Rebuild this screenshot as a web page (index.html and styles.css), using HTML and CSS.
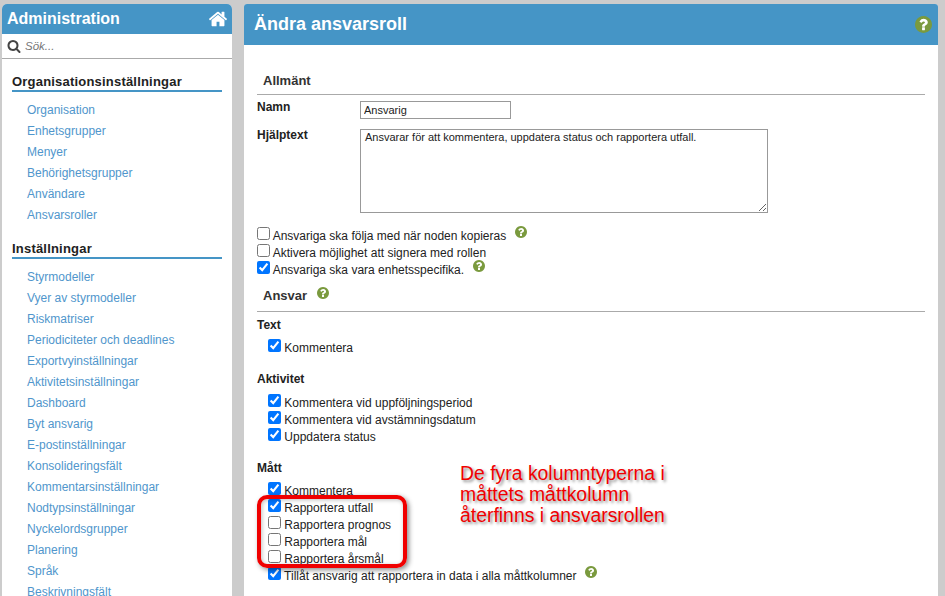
FILE: index.html
```html
<!DOCTYPE html>
<html lang="sv">
<head>
    <meta charset="UTF-8">
    <title>Ändra ansvarsroll</title>
    <link rel="stylesheet" href="styles.css">
</head>
<body>
    <svg class="defs" width="0" height="0">
        <symbol id="help" viewBox="128 128 1536 1536">
            <circle cx="896" cy="896" r="640" fill="#fff"/>
            <path d="M1024 1376v-192q0-14-9-23t-23-9h-192q-14 0-23 9t-9 23v192q0 14 9 23t23 9h192q14 0 23-9t9-23zm256-672q0-88-55.500-163t-138.500-116-170-41q-243 0-371 213-15 24 8 42l132 100q7 6 19 6 16 0 25-12 53-68 86-92 34-24 86-24 48 0 85.500 26t37.500 59q0 38-20 61t-68 45q-63 28-115.500 86.500t-52.500 125.500v36q0 14 9 23t23 9h192q14 0 23-9t9-23q0-19 21.500-49.500t54.500-49.500q32-18 49-28.500t46-35 44.500-48 28-60.500 12.500-81zm384 192q0 209-103 385.500t-279.500 279.500-385.500 103-385.500-103-279.500-279.500-103-385.500 103-385.500 279.500-279.500 385.500-103 385.500 103 279.500 279.500 103 385.500z"/>
        </symbol>
    </svg>

    <div class="page">
        <aside class="sidebar">
            <div class="side-head">
                <span>Administration</span>
                <svg class="home" viewBox="0 0 1792 1792"><path d="M1472 992v480q0 26-19 45t-45 19h-384v-384h-256v384h-384q-26 0-45-19t-19-45v-480q0-1 .5-3t.5-3l575-474 575 474q1 2 1 6zm223-69l-62 74q-8 9-21 11h-3q-13 0-21-7l-692-577-692 577q-12 8-24 7-13-2-21-11l-62-74q-8-10-7-23.500t11-21.500l719-599q32-26 76-26t76 26l244 204v-195q0-14 9-23t23-9h192q14 0 23 9t9 23v408l219 182q10 8 11 21.500t-7 23.500z"/></svg>
            </div>
            <div class="search">
                <svg class="search-icon" viewBox="0 0 1792 1792"><path d="M1216 832q0-185-131.500-316.500t-316.500-131.500-316.500 131.500-131.500 316.500 131.500 316.500 316.500 131.500 316.500-131.500 131.500-316.500zm512 832q0 52-38 90t-90 38q-54 0-90-38l-343-342q-179 124-399 124-143 0-273.500-55.500t-225-150-150-225-55.500-273.500 55.500-273.500 150-225 225-150 273.500-55.500 273.500 55.500 225 150 150 225 55.500 273.500q0 220-124 399l343 343q37 37 37 90z"/></svg>
                <span>Sök...</span>
            </div>
            <h3 class="nav-title">Organisationsinställningar</h3>
            <ul class="nav">
                <li>Organisation</li>
                <li>Enhetsgrupper</li>
                <li>Menyer</li>
                <li>Behörighetsgrupper</li>
                <li>Användare</li>
                <li>Ansvarsroller</li>
            </ul>
            <h3 class="nav-title">Inställningar</h3>
            <ul class="nav">
                <li>Styrmodeller</li>
                <li>Vyer av styrmodeller</li>
                <li>Riskmatriser</li>
                <li>Periodiciteter och deadlines</li>
                <li>Exportvyinställningar</li>
                <li>Aktivitetsinställningar</li>
                <li>Dashboard</li>
                <li>Byt ansvarig</li>
                <li>E-postinställningar</li>
                <li>Konsolideringsfält</li>
                <li>Kommentarsinställningar</li>
                <li>Nodtypsinställningar</li>
                <li>Nyckelordsgrupper</li>
                <li>Planering</li>
                <li>Språk</li>
                <li>Beskrivningsfält</li>
            </ul>
        </aside>

        <main class="content">
            <div class="main-head">
                <h1>Ändra ansvarsroll</h1>
                <svg class="help head-help"><use href="#help"/></svg>
            </div>
            <div class="form">
                <h2 class="section first">Allmänt</h2>
                <div class="field name-field">
                    <label>Namn</label>
                    <input type="text" class="text-input" value="Ansvarig">
                </div>
                <div class="field">
                    <label>Hjälptext</label>
                    <textarea class="text-area">Ansvarar för att kommentera, uppdatera status och rapportera utfall.</textarea>
                </div>

                <div class="checks general">
                    <label class="check"><input type="checkbox"> Ansvariga ska följa med när noden kopieras <svg class="help gap"><use href="#help"/></svg></label>
                    <label class="check"><input type="checkbox"> Aktivera möjlighet att signera med rollen</label>
                    <label class="check"><input type="checkbox" checked> Ansvariga ska vara enhetsspecifika. <svg class="help gap"><use href="#help"/></svg></label>
                </div>

                <h2 class="section">Ansvar <svg class="help section-help"><use href="#help"/></svg></h2>

                <h4 class="group">Text</h4>
                <div class="checks sub">
                    <label class="check"><input type="checkbox" checked> Kommentera</label>
                </div>

                <h4 class="group group-wide">Aktivitet</h4>
                <div class="checks sub">
                    <label class="check"><input type="checkbox" checked> Kommentera vid uppföljningsperiod</label>
                    <label class="check"><input type="checkbox" checked> Kommentera vid avstämningsdatum</label>
                    <label class="check"><input type="checkbox" checked> Uppdatera status</label>
                </div>

                <h4 class="group">Mått</h4>
                <div class="checks sub">
                    <label class="check"><input type="checkbox" checked> Kommentera</label>
                    <label class="check"><input type="checkbox" checked> Rapportera utfall</label>
                    <label class="check"><input type="checkbox"> Rapportera prognos</label>
                    <label class="check"><input type="checkbox"> Rapportera mål</label>
                    <label class="check"><input type="checkbox"> Rapportera årsmål</label>
                    <label class="check"><input type="checkbox" checked> Tillåt ansvarig att rapportera in data i alla måttkolumner <svg class="help gap"><use href="#help"/></svg></label>
                </div>
            </div>
        </main>
    </div>

    <div class="callout-box"></div>
    <div class="callout-text">De fyra kolumntyperna i<br>måttets måttkolumn<br>återfinns i ansvarsrollen</div>
</body>
</html>
```

FILE: styles.css
```css
html, body {
    height: 596px;
    overflow: hidden;
}
body {
    margin: 0;
    background-color: #cccccc;
    font-family: "Liberation Sans", Arial, sans-serif;
    font-size: 12px;
    color: #222;
}
.defs {
    position: absolute;
}
.page {
    display: flex;
    align-items: flex-start;
    gap: 12px;
    padding: 4px 7px 0 2px;
}

/* sidebar */
.sidebar {
    width: 230px;
    height: 592px;
    flex: none;
    overflow: hidden;
    background-color: #fff;
    border-radius: 5px 5px 0 0;
}
.side-head {
    display: flex;
    align-items: center;
    justify-content: space-between;
    height: 30px;
    padding: 0 4px 0 5px;
    background-color: #4595c6;
    color: #fff;
    font-size: 16px;
    font-weight: bold;
}
.home {
    width: 20px;
    height: 20px;
    fill: #fff;
}
.search {
    display: flex;
    align-items: center;
    gap: 4px;
    height: 24px;
    padding: 0 5px;
    border-bottom: 1px solid #aaa;
    color: #777;
    font-size: 11.5px;
    font-style: italic;
}
.search-icon {
    width: 14px;
    height: 14px;
    fill: #444;
}
.nav-title {
    margin: 15px 10px 0 10px;
    border-bottom: 2px solid #4595c6;
    font-size: 13px;
    line-height: 16px;
    font-weight: bold;
    letter-spacing: 0.2px;
    color: #222;
}
.nav {
    list-style: none;
    margin: 8px 0 0 0;
    padding: 0 0 0 25px;
}
.nav li {
    height: 21px;
    line-height: 21px;
    color: #5096cc;
}

/* main */
.content {
    flex: 1;
    height: 592px;
    overflow: hidden;
    background-color: #fff;
    border-radius: 3px 3px 0 0;
}
.main-head {
    display: flex;
    align-items: center;
    justify-content: space-between;
    height: 41px;
    padding: 0 6px 0 10px;
    background-color: #4595c6;
}
.main-head h1 {
    margin: 0;
    font-size: 18px;
    font-weight: bold;
    color: #fff;
}
.help {
    width: 12px;
    height: 12px;
    fill: #7a9a3e;
}
.head-help {
    width: 17px;
    height: 17px;
}
.form {
    padding: 0 13px;
}
.section {
    margin: 0;
    padding: 0 0 7px 6px;
    border-bottom: 1px solid #aaa;
    font-size: 13px;
    line-height: 16px;
    font-weight: bold;
    color: #333;
}
.section.first {
    margin-top: 28px;
    padding-bottom: 5px;
}
.section-help {
    margin: -4px 0 0 6px;
    vertical-align: 1px;
}
.field {
    display: flex;
    align-items: flex-start;
}
.field label {
    width: 103px;
    flex: none;
    font-weight: bold;
    line-height: 13px;
}
.name-field {
    margin-top: 6px;
    margin-bottom: 10px;
}
.text-input {
    box-sizing: border-box;
    width: 151px;
    height: 18px;
    margin: 0;
    padding: 1px 3px;
    border: 1px solid #999;
    font-family: inherit;
    font-size: 11px;
    color: #222;
}
.text-area {
    box-sizing: border-box;
    width: 408px;
    height: 84px;
    margin: 0;
    padding: 1px 4px;
    border: 1px solid #999;
    font-family: inherit;
    font-size: 11px;
    color: #222;
}
.checks {
    display: flex;
    flex-direction: column;
}
.general {
    margin-top: 14px;
    margin-bottom: 10px;
}
.sub {
    padding-left: 11px;
}
.check {
    display: block;
    height: 17px;
    line-height: 17px;
    white-space: nowrap;
}
.check input {
    width: 13px;
    height: 13px;
    margin: 0;
}
.gap {
    margin: -4px 0 0 5.5px;
    vertical-align: 2px;
}
.group {
    margin: 6px 0 7px 0;
    font-size: 12px;
    line-height: 14px;
    font-weight: bold;
    color: #222;
}
.checks + .group {
    margin-top: 16px;
}
.group-wide {
    margin-bottom: 8px;
}

/* annotation drawn over the page */
.callout-box {
    position: absolute;
    left: 257px;
    top: 495px;
    width: 142px;
    height: 65px;
    border: 4px solid #f00000;
    border-radius: 10px;
    box-shadow: 2px 2px 5px rgba(0, 0, 0, 0.45), inset 1px 1px 4px rgba(0, 0, 0, 0.25);
}
.callout-text {
    position: absolute;
    left: 460px;
    top: 463px;
    font-size: 19.4px;
    line-height: 21px;
    color: #f00000;
    text-shadow: 2px 2px 3px rgba(0, 0, 0, 0.45);
    white-space: nowrap;
}
```
